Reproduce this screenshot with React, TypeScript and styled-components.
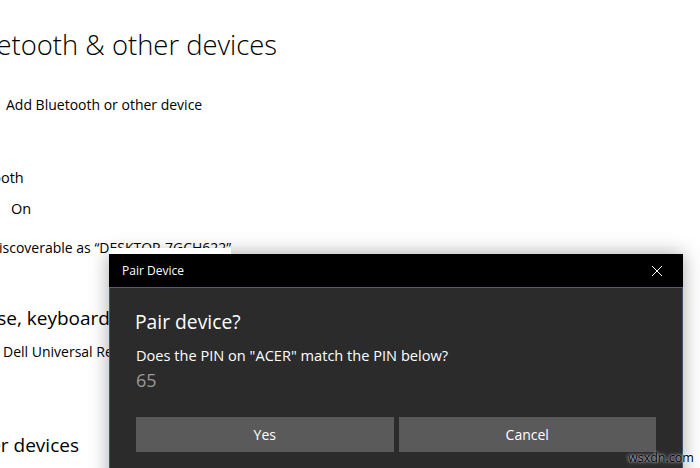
import React from "react";
import styled, { createGlobalStyle } from "styled-components";

const Global = createGlobalStyle`
  html, body { margin: 0; padding: 0; background: #ffffff; }
  body { width: 700px; height: 468px; overflow: hidden; font-family: "Open Sans", "Noto Sans", sans-serif; }
  #root { position: relative; width: 700px; height: 468px; overflow: hidden; }
`;

const Page = styled.div`
  display: flex;
  flex-direction: column;
  margin-left: -43px;
  color: #000;
`;

const Title = styled.h1`
  margin: 28px 0 0 0;
  font-family: "Open Sans", sans-serif;
  font-weight: 300;
  font-size: 27.4px;
  line-height: 34px;
  white-space: nowrap;
`;

const SectionHeading = styled.h2<{ $mt: number }>`
  margin: ${(p) => p.$mt}px 0 0 0;
  font-weight: 400;
  font-size: 19px;
  line-height: 28px;
  white-space: nowrap;
`;

const Line = styled.div<{ $mt: number; $size?: number }>`
  margin-top: ${(p) => p.$mt}px;
  font-size: ${(p) => p.$size ?? 14}px;
  line-height: 20px;
  white-space: nowrap;
  display: flex;
  align-items: center;
`;

const PlusBox = styled.span`
  width: 40px;
  height: 20px;
  margin-right: 9px;
  flex: none;
`;

const Toggle = styled.span`
  width: 40px;
  height: 20px;
  margin-right: 14px;
  flex: none;
`;

const DeviceIcon = styled.span`
  width: 40px;
  height: 20px;
  margin-right: 6px;
  flex: none;
`;

const Dialog = styled.div`
  position: absolute;
  left: 109px;
  top: 254px;
  width: 574px;
  height: 240px;
  background: #2b2b2b;
  box-shadow: 0 0 18px rgba(0, 0, 0, 0.35);
  display: flex;
  flex-direction: column;
`;

const Cover = styled.div`
  position: absolute;
  left: 0;
  top: -6px;
  width: 122px;
  height: 6px;
  background: #ffffff;
`;

const TitleBar = styled.div`
  height: 33px;
  background: #000;
  display: flex;
  align-items: center;
  justify-content: space-between;
  padding: 0 20px 0 13px;
  color: #fff;
  font-size: 12px;
  flex: none;
`;

const CloseBtn = styled.span`
  width: 12px;
  height: 12px;
  display: flex;
`;

const Body = styled.div`
  flex: 1;
  border-top: 1px solid #4a6379;
  border-left: 1px solid #3f5870;
  border-right: 1px solid #3f5870;
  padding: 20px 26px 0 25px;
  display: flex;
  flex-direction: column;
  color: #fff;
`;

const Question = styled.div`
  font-size: 19.3px;
  line-height: 28px;
`;

const Message = styled.div`
  margin-top: 9px;
  font-size: 14.6px;
  line-height: 20px;
  padding-left: 1px;
`;

const Pin = styled.div`
  margin-top: 3px;
  font-size: 18px;
  line-height: 24px;
  color: #9a9a9a;
  padding-left: 1px;
`;

const Buttons = styled.div`
  margin-top: 25px;
  display: grid;
  grid-template-columns: 1fr 1fr;
  gap: 5px;
  padding-left: 1px;
`;

const Button = styled.button`
  height: 35px;
  border: none;
  background: #5a5a5a;
  color: #fff;
  font-family: "Open Sans", sans-serif;
  font-size: 14px;
  padding: 0;
`;

const Watermark = styled.div`
  position: absolute;
  left: 628px;
  top: 449px;
  font-size: 12.5px;
  color: #000;
  text-shadow: 0 0 2px rgba(255, 255, 255, 0.9), 0 0 4px rgba(255, 255, 255, 0.6);
  font-family: "Open Sans", sans-serif;
  white-space: nowrap;
`;

export default function App() {
  return (
    <>
      <Global />
      <Page>
        <Title>Bluetooth &amp; other devices</Title>
        <Line $mt={33} $size={14}>
          <PlusBox />
          Add Bluetooth or other device
        </Line>
        <Line $mt={53} $size={14.5}>Bluetooth</Line>
        <Line $mt={11} $size={14.5}>
          <Toggle />
          On
        </Line>
        <Line $mt={19} $size={14}>Now discoverable as “DESKTOP-7GCH622”</Line>
        <SectionHeading $mt={46}>Mouse, keyboard, &amp; pen</SectionHeading>
        <Line $mt={10} $size={14}>
          <DeviceIcon />
          Dell Universal Receiver
        </Line>
        <SectionHeading $mt={69}>Other devices</SectionHeading>
      </Page>
      <Dialog>
        <Cover />
        <TitleBar>
          <span>Pair Device</span>
          <CloseBtn>
            <svg width="12" height="12" viewBox="0 0 12 12">
              <path d="M1 1 L11 11 M11 1 L1 11" stroke="#fff" strokeWidth="1" fill="none" />
            </svg>
          </CloseBtn>
        </TitleBar>
        <Body>
          <Question>Pair device?</Question>
          <Message>Does the PIN on "ACER" match the PIN below?</Message>
          <Pin>65</Pin>
          <Buttons>
            <Button>Yes</Button>
            <Button>Cancel</Button>
          </Buttons>
        </Body>
      </Dialog>
      <Watermark>wsxdn.com</Watermark>
    </>
  );
}
